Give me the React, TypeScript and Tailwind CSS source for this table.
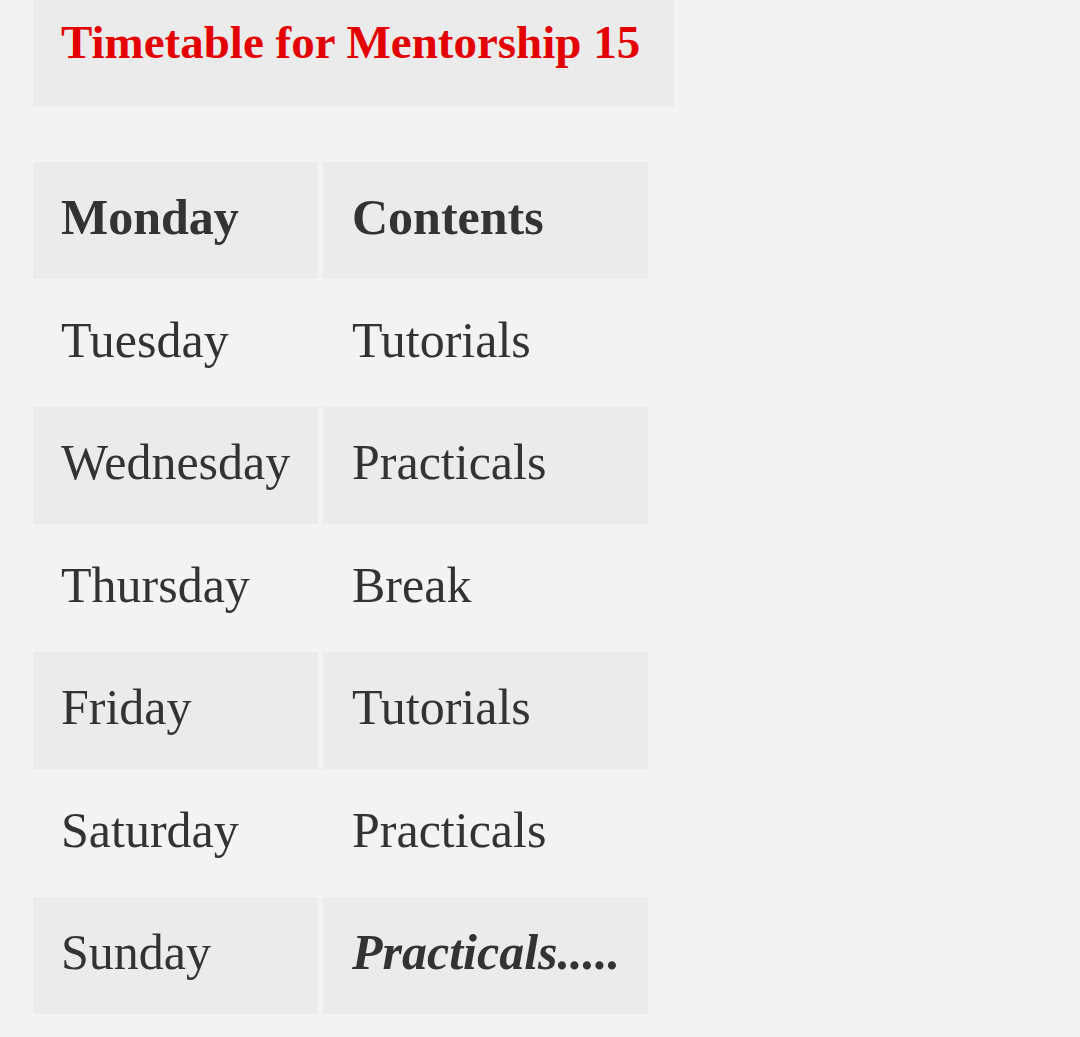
import React from "react";

const rows: [string, string][] = [
  ["Tuesday", "Tutorials"],
  ["Wednesday", "Practicals"],
  ["Thursday", "Break"],
  ["Friday", "Tutorials"],
  ["Saturday", "Practicals"],
];

export default function App() {
  return (
    <div
      className="w-[1080px] h-[1037px] bg-[#f3f3f3] text-[#333333] overflow-hidden pl-[33px]"
      style={{ fontFamily: '"Liberation Serif", serif' }}
    >
      <div className="w-[641px] h-[107px] bg-[#ebebeb] pl-[28px] pt-[14px]">
        <h1 className="text-[47px] font-bold leading-[56px] text-[#e40000]">
          Timetable for Mentorship 15
        </h1>
      </div>
      <div className="mt-[55px] grid grid-cols-[285px_325px] gap-x-[5px] gap-y-[5.5px] auto-rows-[117px] text-[50px]">
        <div className="bg-[#ebebeb] flex items-center pl-[28px] pb-[6px] font-bold">Monday</div>
        <div className="bg-[#ebebeb] flex items-center pl-[29px] pb-[6px] font-bold">Contents</div>
        {rows.map(([d, c], i) => {
          const bg = i % 2 === 1 ? "bg-[#ebebeb]" : "";
          return (
            <React.Fragment key={d}>
              <div className={`${bg} flex items-center pl-[28px] pb-[6px]`}>{d}</div>
              <div className={`${bg} flex items-center pl-[29px] pb-[6px]`}>{c}</div>
            </React.Fragment>
          );
        })}
        <div className="bg-[#ebebeb] flex items-center pl-[28px] pb-[6px]">Sunday</div>
        <div className="bg-[#ebebeb] flex items-center pl-[29px] pb-[6px] font-bold italic">Practicals.....</div>
      </div>
    </div>
  );
}
